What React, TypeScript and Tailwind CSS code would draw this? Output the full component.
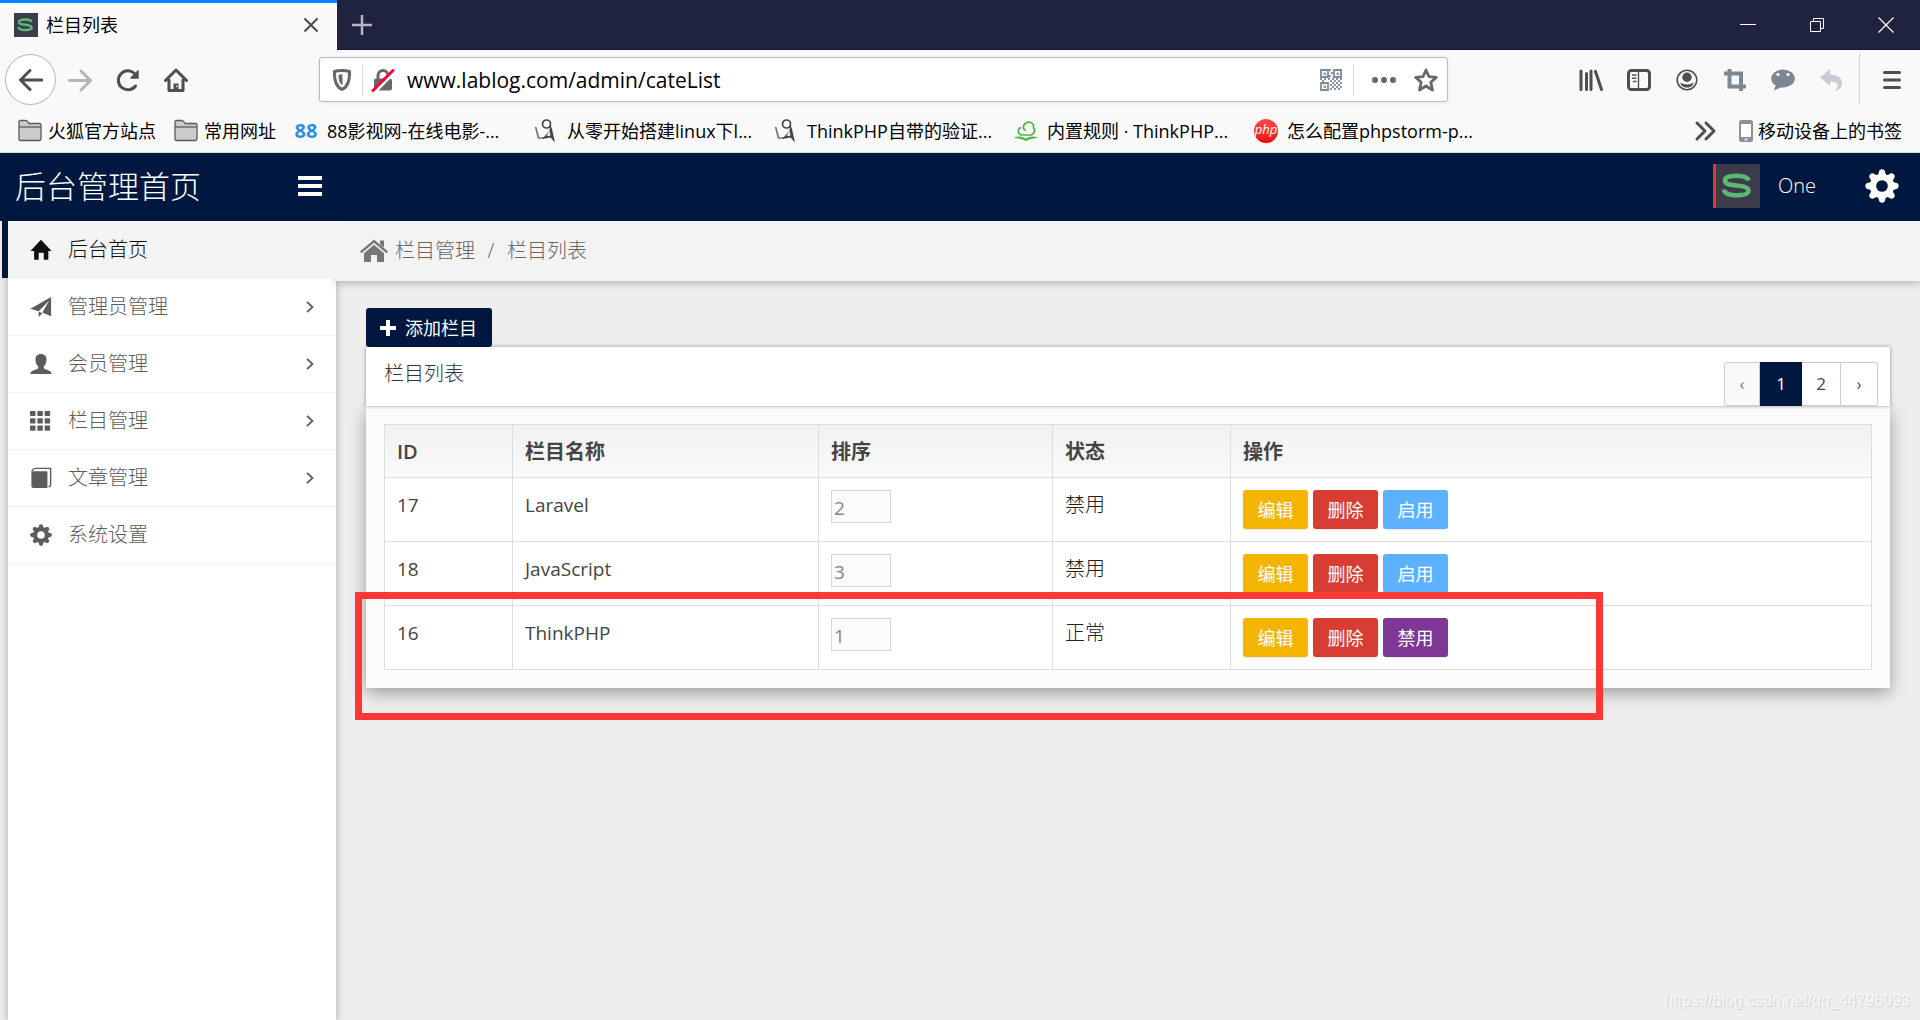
import type { ReactNode } from 'react';

type IconProps = { className?: string };

/* ---------- Logos ---------- */

function SLogo({ className = '' }: IconProps) {
    return (
        <svg viewBox="0 0 44 44" className={className} preserveAspectRatio="none">
            <rect width="44" height="44" fill="#3b3b4b" />
            <path
                d="M32.500 16.500C31.500 13 27 11.800 20.500 11.800C13 11.800 9 13.500 9 16.800C9 20 13 20.800 20.500 21.600C28.500 22.500 32.500 23.500 32.500 26.800C32.500 30 28 31.300 20.500 31.300C12.500 31.300 8.500 29.500 8 25.500"
                fill="none"
                stroke="#5cb971"
                strokeWidth="4.500"
            />
        </svg>
    );
}

function FigureLogo() {
    return (
        <svg viewBox="0 0 24 24" className="w-6 h-6">
            <circle cx="12.500" cy="5" r="4" fill="none" stroke="#444" strokeWidth="1.700" />
            <path d="M1.500 8c1.500 4 2 8 3 11h5.500" fill="none" stroke="#777" strokeWidth="1.700" />
            <path d="M16 5l2 5 3 13.500-4.500-5-8.500 1.500 7.500-8z" fill="#444" />
            <path d="M15.500 12l1 4.500-4 .8z" fill="#f9f9f9" />
        </svg>
    );
}

function CloudBookLogo() {
    return (
        <svg viewBox="0 0 24 24" className="w-6 h-6" fill="none" stroke="#4db848" strokeWidth="1.700">
            <path d="M12 11.500c-3-.5-4-5 0-7.500 4-2.500 8.500.5 7.500 5 3 3-.5 7.500-4 7H8c-4.500-.5-5-6-1-7.500" />
            <path d="M1 18.500c4-1 8-.5 11 1.500 3-2 7-2.500 11-1.500-4 .5-8 1.300-11 3C9 19.800 5 19 1 18.500z" fill="#4db848" strokeWidth="1" />
        </svg>
    );
}

function PhpLogo() {
    return (
        <span className="flex w-6 h-6 rounded-full bg-gradient-to-b from-[#ff4a4a] to-[#f40000] text-white text-[13px] leading-5 italic justify-center">
            php
        </span>
    );
}

/* ---------- Browser icons ---------- */

function Stroke({ children, width = 3, className = '' }: { children: ReactNode; width?: number; className?: string }) {
    return (
        <svg
            viewBox="0 0 24 24"
            className={`w-6 h-6 ${className}`}
            fill="none"
            stroke="currentColor"
            strokeWidth={width}
            strokeLinecap="round"
            strokeLinejoin="round"
        >
            {children}
        </svg>
    );
}

function Folder() {
    return (
        <svg viewBox="0 0 24 24" className="w-6 h-6" stroke="#5a5a5a" strokeWidth="1.300">
            <path d="M1 3q0-1.500 1.500-1.500h5q1.500 0 2.500 1.500l1 1.500h10.500q1.500 0 1.500 1.500V20q0 1.500-1.500 1.500H2.500Q1 21.500 1 20z" fill="#cbcbcb" />
            <path d="M1 8h22" fill="none" />
        </svg>
    );
}

function QrCode() {
    const dots = [
        [10, 1], [12, 4], [10, 7], [1, 10], [5, 10], [9, 10], [13, 10], [17, 10], [21, 10],
        [3, 12], [11, 12], [15, 12], [19, 12], [13, 14], [17, 14], [21, 14], [11, 16], [15, 16],
        [19, 16], [13, 18], [17, 18], [21, 18], [11, 20], [15, 20], [19, 20],
    ];
    return (
        <svg viewBox="0 0 24 24" className="w-6 h-6" fill="none" stroke="#7f8a98" strokeWidth="1.800">
            <path d="M2 2h7v7H2zM15 2h7v7h-7zM2 15h7v7H2z" />
            <path d="M5 5h1.500v1.500H5zM18 5h1.500v1.500H18zM5 18h1.500v1.500H5z" strokeWidth="1" />
            {dots.map(([x, y]) => (
                <rect key={`${x}-${y}`} x={x} y={y} width="2" height="2" fill="#8b95a2" stroke="none" />
            ))}
        </svg>
    );
}

/* ---------- Admin icons ---------- */

function Gear({ className = '' }: IconProps) {
    return (
        <svg viewBox="0 0 32 32" className={className} stroke="currentColor" fill="none">
            <circle cx="16" cy="16" r="8.500" strokeWidth="6" />
            {[0, 45, 90, 135, 180, 225, 270, 315].map((a) => (
                <path key={a} d="M13.500 1.500q2.500-2.500 5 0l1.500 5h-8z" fill="currentColor" stroke="none" transform={`rotate(${a} 16 16)`} />
            ))}
        </svg>
    );
}

function HomeGlyph() {
    return <path d="M12 .8L23.500 13H20v9.500h-5V15H9.500v7.500h-5V13H.5z" />;
}

function SendGlyph() {
    return (
        <>
            <path d="M23 1v21l-9.500-4L21 5 9.500 16.500.5 14z" />
            <path d="M9.500 17v6l4-4.300z" />
        </>
    );
}

function UserGlyph() {
    return <path d="M12 1c4 0 6 2.500 6 6 0 4-1.500 6.500-3 7.500v2c2 1.500 5 2 7 3.500 1 .8 1.500 1.500 1.500 3H.5c0-1.500.5-2.200 1.500-3 2-1.500 5-2 7-3.500v-2c-1.500-1-3-3.500-3-7.500 0-3.500 2-6 6-6z" />;
}

function GridGlyph() {
    return (
        <>
            {[1, 9, 17].map((y) => [0, 8, 16].map((x) => <rect key={`${x}-${y}`} x={x} y={y} width="6" height="5.600" rx=".8" />))}
        </>
    );
}

function BookGlyph() {
    return (
        <>
            <path d="M2 4.500h16q1 0 1 1V23H4q-2.500 0-2.500-2V4z" />
            <path d="M2 4.500Q3.500 1.500 6 1.500h16.500V20l-2 2" fill="none" stroke="currentColor" strokeWidth="1.500" />
        </>
    );
}

function Glyph({ children }: { children: ReactNode }) {
    return (
        <svg viewBox="0 0 24 24" className="w-[22px] h-[22px]" fill="currentColor">
            {children}
        </svg>
    );
}

/* ---------- Data ---------- */

const bookmarks = [
    { label: '88影视网-在线电影-...', icon: <span className="text-[#2f8fdd] text-[20px] font-bold">88</span> },
    { label: '从零开始搭建linux下l...', icon: <FigureLogo /> },
    { label: 'ThinkPHP自带的验证...', icon: <FigureLogo /> },
    { label: '内置规则 · ThinkPHP...', icon: <CloudBookLogo /> },
    { label: '怎么配置phpstorm-p...', icon: <PhpLogo /> },
];

const menu = [
    { label: '管理员管理', icon: <Glyph><SendGlyph /></Glyph>, children: true },
    { label: '会员管理', icon: <Glyph><UserGlyph /></Glyph>, children: true },
    { label: '栏目管理', icon: <Glyph><GridGlyph /></Glyph>, children: true },
    { label: '文章管理', icon: <Glyph><BookGlyph /></Glyph>, children: true },
    { label: '系统设置', icon: <Gear className="w-[22px] h-[22px]" />, children: false },
];

const cates = [
    { id: 17, name: 'Laravel', sort: 2, enabled: false },
    { id: 18, name: 'JavaScript', sort: 3, enabled: false },
    { id: 16, name: 'ThinkPHP', sort: 1, enabled: true },
];

/* ---------- Browser chrome ---------- */

function TabStrip() {
    return (
        <div className="flex h-[50px] bg-[#202340] border-b border-[#15152f]">
            <div className="w-[337px] h-[50px] bg-[#f9f9f9] border-t-[3px] border-[#0a84ff] flex items-center pl-[14px] pr-[18px] pb-1 shrink-0">
                <SLogo className="w-6 h-6" />
                <span className="ml-2 flex-1 text-[18px] leading-6">栏目列表</span>
                <button aria-label="关闭标签页" className="text-[#4a4a4f]">
                    <svg viewBox="0 0 16 16" className="w-4 h-4" stroke="currentColor" strokeWidth="2"><path d="M1.500 1.500l13 13M14.500 1.500l-13 13" /></svg>
                </button>
            </div>
            <button aria-label="新标签页" className="w-[50px] flex items-center justify-center text-[#b5b5c3]">
                <svg viewBox="0 0 22 22" className="w-[22px] h-[22px]" stroke="currentColor" strokeWidth="2.500"><path d="M11 1v20M1 11h20" /></svg>
            </button>
            <div className="flex ml-auto text-white">
                <button aria-label="最小化" className="w-[69px] flex items-center justify-center">
                    <svg viewBox="0 0 16 16" className="w-4 h-4" stroke="currentColor"><path d="M0 7.500h16" /></svg>
                </button>
                <button aria-label="还原" className="w-[69px] flex items-center justify-center">
                    <svg viewBox="0 0 16 16" className="w-4 h-4" fill="none" stroke="currentColor"><path d="M1.500 4.500h10v10h-10zM4.500 4V1.500h10v10H12" /></svg>
                </button>
                <button aria-label="关闭" className="w-[69px] flex items-center justify-center">
                    <svg viewBox="0 0 16 16" className="w-4 h-4" stroke="currentColor" strokeWidth="1.200"><path d="M.5.5l15 15M15.500.5l-15 15" /></svg>
                </button>
            </div>
        </div>
    );
}

function ToolButton({ label, children, className = '' }: { label: string; children: ReactNode; className?: string }) {
    return (
        <button aria-label={label} className={`w-12 h-12 flex items-center justify-center shrink-0 ${className}`}>
            {children}
        </button>
    );
}

function NavBar() {
    return (
        <div className="flex items-center h-[59px] pl-[5px] pr-1 text-[#4f4f4f]">
            <button aria-label="后退" className="w-[51px] h-[51px] rounded-full border border-[#b4b4b4] bg-white flex items-center justify-center shrink-0">
                <Stroke><path d="M23 12H2M11 2.500L1.500 12l9.500 9.500" /></Stroke>
            </button>
            <ToolButton label="前进" className="text-[#b5b5b5]">
                <Stroke><path d="M1.500 12.500H22M13 3l9.500 9.500L13 22" /></Stroke>
            </ToolButton>
            <ToolButton label="刷新">
                <Stroke>
                    <path d="M19.500 18A9.500 9.500 0 1 1 18.500 5.500" />
                    <path d="M22 3v7h-7z" fill="currentColor" strokeWidth="1.500" />
                </Stroke>
            </ToolButton>
            <ToolButton label="主页">
                <Stroke>
                    <path d="M1.500 12.500L12 2l10.500 10.500M5 12v10.500h14V12" />
                    <path d="M12 21v-5.500" strokeWidth="5" strokeLinecap="butt" />
                    <path d="M12.800 18.300v.1" stroke="#f9f9f9" strokeWidth="1.500" />
                </Stroke>
            </ToolButton>

            {/* Address bar */}
            <div className="flex-1 mx-[119px] h-[45px] bg-white border border-[#bcbcbc] rounded-[3px] shadow-[0_1px_4px_rgba(0,0,0,0.08)] flex items-center pl-[10px] pr-[9px] text-[#686868]">
                <Stroke>
                    <path d="M12 2.500c3 0 5.500.3 7.500 1 .3 8-1 15-7.500 18C5.500 18.500 4.200 11.500 4.500 3.500c2-.7 4.500-1 7.500-1z" />
                    <path d="M12 7v9.500C9.500 15 9 11 9 7.500z" fill="currentColor" strokeWidth="1" />
                </Stroke>
                <span className="w-px h-8 bg-[#dcdcdc] mx-2" />
                <svg viewBox="0 0 24 24" className="w-6 h-6">
                    <rect x="3" y="10.500" width="18" height="12" rx="2" fill="#686868" />
                    <path d="M7 11V7.500a5 5 0 0 1 10 0V11" fill="none" stroke="#686868" strokeWidth="3" />
                    <path d="M4 24L23.500 4" stroke="#fff" strokeWidth="3" />
                    <path d="M2 22.500L22 2.500" stroke="#ff0039" strokeWidth="3" strokeLinecap="round" />
                </svg>
                <input
                    aria-label="地址"
                    defaultValue="www.lablog.com/admin/cateList"
                    className="flex-1 min-w-0 ml-3 h-8 text-[21px] text-black outline-none"
                />
                <QrCode />
                <span className="w-px h-8 bg-[#dcdcdc] ml-[10px] mr-[18px]" />
                <svg viewBox="0 0 24 24" className="w-6 h-6" fill="currentColor">
                    <circle cx="3" cy="12" r="3" /><circle cx="12" cy="12" r="3" /><circle cx="21" cy="12" r="3" />
                </svg>
                <span className="w-[18px]" />
                <Stroke width={2.8}>
                    <path d="M12 2l3 6.700 7.300.7-5.500 4.900 1.700 7.700L12 18l-6.500 4 1.700-7.700L1.700 9.400 9 8.700z" />
                </Stroke>
            </div>

            <ToolButton label="书库">
                <Stroke><path d="M2 3v18.500M7.500 5.500v16M12 3v18.500M16.500 3.500L22.500 21.500" /></Stroke>
            </ToolButton>
            <ToolButton label="侧栏">
                <Stroke width={3}>
                    <rect x="1.500" y="2.500" width="21" height="19" rx="3" />
                    <path d="M11.500 2.500v19M5.500 7h3.500M5.500 10.300h3.500M6.500 13.500H9" strokeWidth="1.400" />
                </Stroke>
            </ToolButton>
            <ToolButton label="帐户">
                <svg viewBox="0 0 24 24" className="w-6 h-6" fill="currentColor">
                    <circle cx="12" cy="12" r="9.800" fill="none" stroke="currentColor" strokeWidth="1.600" />
                    <circle cx="12" cy="9.300" r="4.700" />
                    <path d="M5.500 14.500c3 2.500 10 2.500 13 0 0 3-3 5-6.500 5s-6.500-2-6.500-5z" />
                </svg>
            </ToolButton>
            <ToolButton label="截图" className="text-[#7b8794]">
                <svg viewBox="0 0 24 24" className="w-6 h-6" fill="none" stroke="currentColor" strokeWidth="4">
                    <path d="M1 5.500h17V23M6.500 1v17.500H23" />
                </svg>
            </ToolButton>
            <ToolButton label="聊天" className="text-[#7b8794]">
                <svg viewBox="0 0 24 24" className="w-6 h-6" fill="currentColor">
                    <ellipse cx="12" cy="10.500" rx="11.800" ry="9" />
                    <path d="M5 16l-2 6.500 9-4z" />
                    <circle cx="7" cy="6.500" r="1.600" fill="#fff" /><circle cx="17" cy="6.500" r="1.600" fill="#fff" />
                </svg>
            </ToolButton>
            <ToolButton label="撤销" className="text-[#c9cdd3]">
                <svg viewBox="0 0 24 24" className="w-6 h-6" fill="currentColor">
                    <path d="M1 9.500L11 1v5.500c8 0 12 3.500 12 9 0 4-3 7-8 7.500 3-1.500 4-3.500 3.500-6-.5-2.500-3-3.500-7.500-3.500V18z" />
                </svg>
            </ToolButton>
            <span className="w-px h-[51px] bg-[#d5d5d5] ml-1 mr-2" />
            <ToolButton label="菜单">
                <Stroke><path d="M4.500 4.500h15M4.500 12h15M4.500 19.500h15" /></Stroke>
            </ToolButton>
        </div>
    );
}

function BookmarkBar() {
    return (
        <div className="flex items-center h-11 pl-[18px] pr-[18px] border-b border-[#d9d9d9] text-[18px] leading-6 whitespace-nowrap">
            <a href="#" className="w-[156px] flex items-center gap-[6px]"><Folder />火狐官方站点</a>
            <a href="#" className="w-[120px] flex items-center gap-[6px]"><Folder />常用网址</a>
            {bookmarks.map((b) => (
                <a key={b.label} href="#" className="w-[240px] flex items-center gap-[9px]">
                    <span className="w-6 shrink-0 flex justify-center">{b.icon}</span>
                    {b.label}
                </a>
            ))}
            <button aria-label="更多书签" className="ml-auto mr-5 text-[#4f4f4f]">
                <Stroke><path d="M3 4l8 8-8 8M12 4l8 8-8 8" /></Stroke>
            </button>
            <a href="#" className="flex items-center gap-1">
                <svg viewBox="0 0 16 24" className="w-4 h-6">
                    <rect x="1" y="1" width="14" height="22" rx="2.500" fill="#8b9198" />
                    <rect x="3" y="5" width="10" height="13" fill="#fff" />
                    <rect x="6.500" y="19.500" width="3" height="2" fill="#dfe2e6" />
                </svg>
                移动设备上的书签
            </a>
        </div>
    );
}

/* ---------- Admin page ---------- */

function AdminHeader() {
    return (
        <header className="flex items-center h-[68px] bg-[#001840] text-white pl-[15px] pr-[21px] pb-[2px]">
            <h1 className="w-[283px] text-[31px] leading-10 font-light">后台管理首页</h1>
            <button aria-label="折叠菜单">
                <svg viewBox="0 0 24 20" className="w-6 h-5" fill="currentColor"><path d="M0 0h24v4H0zM0 8h24v4H0zM0 16h24v4H0z" /></svg>
            </button>
            <div className="ml-auto flex items-center">
                <span className="w-[47px] h-11 border-l-[3px] border-[#d73d32]"><SLogo className="w-full h-full" /></span>
                <span className="w-[105px] pl-[18px] text-[20px] leading-7 font-light">One</span>
                <button aria-label="设置"><Gear className="w-[34px] h-[34px]" /></button>
            </div>
        </header>
    );
}

function Sidebar() {
    return (
        <nav className="w-[336px] shrink-0 pl-2 text-[20px] leading-7 font-light flex flex-col">
            <div className="flex-1 bg-white shadow-[0_0_8px_rgba(0,0,0,0.3)]">
                <a href="#" className="relative z-10 flex items-center h-[58px] bg-[#f4f4f4] text-[#111] pl-[22px] border-b border-[#f1f1f1]">
                    <span className="absolute -left-[6px] top-0 w-[6px] h-[57px] bg-[#001840]" />
                    <Glyph><HomeGlyph /></Glyph>
                    <span className="ml-4">后台首页</span>
                </a>
                {menu.map((m) => (
                    <a key={m.label} href="#" className="flex items-center h-[57px] text-[#5c5c5c] pl-[22px] pr-[22px] border-b border-[#f1f1f1]">
                        {m.icon}
                        <span className="ml-4 flex-1">{m.label}</span>
                        {m.children && (
                            <svg viewBox="0 0 8 12" className="w-2 h-3" fill="none" stroke="currentColor" strokeWidth="1.800"><path d="M1 .8L6.500 6 1 11.200" /></svg>
                        )}
                    </a>
                ))}
            </div>
        </nav>
    );
}

function Breadcrumb() {
    return (
        <div className="relative flex items-center h-[60px] pl-6 bg-[#f3f3f3] text-[#666] text-[20px] leading-7 font-light shadow-[0_2px_8px_rgba(0,0,0,0.25)]">
            <svg viewBox="0 0 28 24" className="w-7 h-6 text-[#777]" fill="currentColor">
                <path d="M14 .5L28 12.500l-1.500 1.800L14 3.800 1.500 14.300 0 12.500z" />
                <path d="M20 1.500h4v7l-4-3.300z" />
                <path d="M14 5.800l10 8.400V23h-7v-7h-6v7H4v-8.800z" />
            </svg>
            <a href="#" className="ml-[7px]">栏目管理</a>
            <span className="w-8 text-center">/</span>
            <span>栏目列表</span>
        </div>
    );
}

function Pagination() {
    const cell = 'h-11 flex items-center justify-center border-y border-r border-[#ccc]';
    return (
        <div className="flex text-[17px] text-[#444] leading-6">
            <button disabled aria-label="上一页" className={`${cell} w-9 border-l rounded-l-[3px] bg-[#f9f9f9] text-[#777]`}>‹</button>
            <button className="h-11 w-[42px] bg-[#001840] text-white">1</button>
            <button className={`${cell} w-[39px] bg-white`}>2</button>
            <button aria-label="下一页" className={`${cell} w-[37px] bg-white rounded-r-[3px]`}>›</button>
        </div>
    );
}

function CateTable() {
    const cell = 'border border-[#ddd] px-3 text-left align-top';
    const btn = 'w-[65px] h-[39px] rounded-[3px] text-white text-[18px] shadow-[0_1px_2px_rgba(0,0,0,0.1)]';
    return (
        <table className="w-full table-fixed border-collapse bg-white text-[#444] text-[19px]">
            <colgroup>
                <col className="w-32" />
                <col className="w-[306px]" />
                <col className="w-[234px]" />
                <col className="w-[178px]" />
                <col />
            </colgroup>
            <thead>
                <tr className="bg-gradient-to-b from-[#f1f1f1] to-[#fafafa] leading-[30px]">
                    {['ID', '栏目名称', '排序', '状态', '操作'].map((h) => (
                        <th key={h} className={`${cell} pt-3 pb-[10px] text-[20px] font-semibold`}>{h}</th>
                    ))}
                </tr>
            </thead>
            <tbody className="leading-[30px]">
                {cates.map((c) => (
                    <tr key={c.id}>
                        <td className={`${cell} py-3`}>{c.id}</td>
                        <td className={`${cell} py-3`}>{c.name}</td>
                        <td className={`${cell} py-3`}>
                            <input
                                aria-label={`${c.name} 排序`}
                                defaultValue={c.sort}
                                className="block w-[60px] h-[33px] pl-[2px] pt-[2px] border border-[#d5d5d5] bg-[#fbfbfb] text-[#858585]"
                            />
                        </td>
                        <td className={`${cell} py-3 text-[20px] font-light text-[#222]`}>{c.enabled ? '正常' : '禁用'}</td>
                        <td className={`${cell} py-3`}>
                            <div className="flex gap-[5px]">
                                <button className={`${btn} bg-[#f4b400]`}>编辑</button>
                                <button className={`${btn} bg-[#d73d32]`}>删除</button>
                                {c.enabled
                                    ? <button className={`${btn} bg-[#7e3794]`}>禁用</button>
                                    : <button className={`${btn} bg-[#5db2ff]`}>启用</button>}
                            </div>
                        </td>
                    </tr>
                ))}
            </tbody>
        </table>
    );
}

export default function App() {
    return (
        <div className="relative min-h-screen flex flex-col overflow-hidden bg-[#f9f9f9] text-black font-['Open_Sans','Noto_Sans_CJK_SC',sans-serif]">
            <TabStrip />
            <NavBar />
            <BookmarkBar />
            <AdminHeader />

            <div className="flex-1 flex bg-[#eee]">
                <Sidebar />
                <main className="flex-1 min-w-0">
                    <Breadcrumb />
                    <div className="px-[30px] pt-[27px] pb-8">
                        <button className="w-[126px] h-[39px] flex items-center pl-[14px] gap-[9px] rounded-[3px] bg-[#001840] text-white text-[18px] leading-6">
                            <svg viewBox="0 0 16 16" className="w-4 h-4" fill="currentColor"><path d="M6 0h4v6h6v4h-6v6H6v-6H0V6h6z" /></svg>
                            添加栏目
                        </button>

                        <div className="relative">
                            <div className="relative h-[59px] bg-white pt-[15px] pl-[18px] pr-3 flex items-start justify-between shadow-[0_0_4px_rgba(0,0,0,0.4)]">
                                <h2 className="text-[20px] leading-6 text-[#333] font-light">栏目列表</h2>
                                <Pagination />
                            </div>
                            <div className="bg-[#fbfbfb] p-[18px] shadow-[0_5px_16px_rgba(0,0,0,0.35)]">
                                <CateTable />
                            </div>

                            {/* Marked area */}
                            <div className="absolute -left-[11px] top-[245px] w-[1248px] h-32 border-[7px] border-[#fb3838] pointer-events-none" />
                        </div>
                    </div>
                </main>
            </div>

            {/* Watermark */}
            <span className="absolute right-[10px] bottom-[7px] text-[16px] leading-6 text-[#f8f8f8] [text-shadow:1px_1px_1px_#ccc] font-['Liberation_Sans',sans-serif]">
                https://blog.csdn.net/qq_44796093
            </span>
        </div>
    );
}
